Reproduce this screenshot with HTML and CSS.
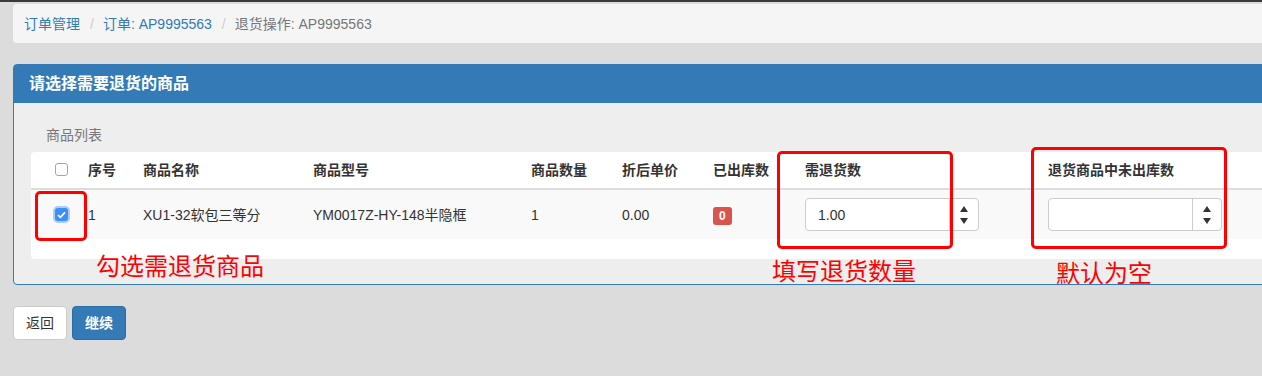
FILE: index.html
```html
<!DOCTYPE html>
<html lang="zh-CN">
<head>
<meta charset="UTF-8">
<title>退货操作: AP9995563</title>
<link rel="stylesheet" href="styles.css">
</head>
<body>
<div class="page">
 <div class="breadcrumb">
  <a href="#">订单管理</a><span class="sep">/</span>
  <a href="#">订单: AP9995563</a><span class="sep">/</span>
  <span class="active">退货操作: AP9995563</span>
 </div>

 <div class="panel">
  <div class="panel-heading">请选择需要退货的商品</div>
  <div class="panel-body">
   <div class="list-label">商品列表</div>
   <div class="table-box">
    <table class="goods">
     <colgroup>
      <col style="width:49px"><col style="width:55px"><col style="width:170px">
      <col style="width:218px"><col style="width:91px"><col style="width:91px">
      <col style="width:92px"><col style="width:243px"><col>
     </colgroup>
     <thead>
      <tr>
       <th class="chk"><span class="cb"></span></th>
       <th>序号</th>
       <th>商品名称</th>
       <th>商品型号</th>
       <th>商品数量</th>
       <th>折后单价</th>
       <th>已出库数</th>
       <th>需退货数</th>
       <th>退货商品中未出库数</th>
      </tr>
     </thead>
     <tbody>
      <tr>
       <td class="chk"><span class="cb checked"><svg width="9" height="8" viewBox="0 0 9 8"><path d="M1 4.2 L3.4 6.4 L8 1.4" fill="none" stroke="#fff" stroke-width="1.7"/></svg></span></td>
       <td>1</td>
       <td>XU1-32软包三等分</td>
       <td>YM0017Z-HY-148半隐框</td>
       <td>1</td>
       <td>0.00</td>
       <td><span class="badge">0</span></td>
       <td>
        <div class="spin">
         <input type="text" value="1.00">
         <span class="arrows"><i class="up"></i><i class="down"></i></span>
        </div>
       </td>
       <td>
        <div class="spin">
         <input type="text" value="">
         <span class="arrows"><i class="up"></i><i class="down"></i></span>
        </div>
       </td>
      </tr>
     </tbody>
    </table>
   </div>
  </div>
 </div>

 <div class="actions">
  <button class="btn">返回</button>
  <button class="btn btn-primary">继续</button>
 </div>
</div>

<!-- annotations drawn over the screenshot -->
<div class="mark mark-1"></div>
<div class="mark mark-2"></div>
<div class="mark mark-3"></div>
<div class="note note-1">勾选需退货商品</div>
<div class="note note-2">填写退货数量</div>
<div class="note note-3">默认为空</div>
</body>
</html>
```

FILE: styles.css
```css
html { overflow: hidden; background: #dcdcdc; }
body { margin: 0; position: relative; border-top: 2px solid #3a3a3a;
       font: 14px "Liberation Sans", "Noto Sans CJK SC", sans-serif;
       line-height: 20px; color: #333; }
a { color: #337ab7; text-decoration: none; }

.page { width: 1300px; padding: 2px 0 0 13px; }

.breadcrumb { display: flex; align-items: center; height: 39px;
              padding: 0 11px; background: #f5f5f5; border-radius: 4px; }
.breadcrumb .sep { color: #ccc; margin: 0 9px 0 10px; }
.breadcrumb .active { color: #777; }

.panel { margin-top: 21px; border: 1px solid #337ab7; border-radius: 4px;
         background: #eee; }
.panel-heading { background: #337ab7; color: #fff; font-size: 16px;
                 font-weight: bold; line-height: 18px; padding: 10px 15px; }
.panel-body { padding: 22px 0 25px 17px; }
.list-label { color: #777; padding-left: 15px; margin-bottom: 7px; }

.table-box { background: #fff; border-radius: 4px; padding-bottom: 20px; }
table.goods { width: 100%; table-layout: fixed; border-collapse: collapse; }
.goods th { text-align: left; padding: 8px; border-bottom: 2px solid #ddd; }
.goods td { padding: 8px; background: #f9f9f9; vertical-align: middle;
            white-space: nowrap; }
.goods .chk { padding-left: 24px; }

.cb { display: inline-block; width: 11px; height: 11px; vertical-align: -1px;
      border: 1px solid #a6a6a6; border-radius: 3px; background: #fff; }
.cb.checked { position: relative; width: 13px; height: 13px; border: 0;
              background: #3d8ef6; box-shadow: 0 0 0 2px #a9cdfb; }
.cb.checked svg { position: absolute; left: 2px; top: 3px; }

.badge { display: inline-block; background: #d9534f; color: #fff;
         font-size: 12px; font-weight: bold; line-height: 18px;
         padding: 0 6px; border-radius: 3px; }

.spin { display: flex; width: 174px; height: 33px; box-sizing: border-box;
        border: 1px solid #ccc; border-radius: 4px; background: #fff; }
.spin input { width: 0; flex: 1; border: 0; outline: 0; padding: 0 12px;
              font: inherit; color: #333; background: transparent; }
.arrows { width: 28px; border-left: 1px solid #ccc; display: flex;
          flex-direction: column; align-items: center; justify-content: center;
          gap: 6px; }
.arrows i { display: block; width: 0; height: 0;
            border-left: 4px solid transparent; border-right: 4px solid transparent; }
.arrows .up { border-bottom: 6px solid #333; }
.arrows .down { border-top: 6px solid #333; }

.actions { display: flex; gap: 5px; margin-top: 21px; }
.btn { font: inherit; line-height: 20px; padding: 6px 12px; border-radius: 4px;
       border: 1px solid #ccc; background: #fff; color: #333; }
.btn-primary { background: #337ab7; border-color: #2e6da4; color: #fff;
               font-weight: bold; }

.mark { position: absolute; box-sizing: border-box; border: 3px solid #f00;
        border-radius: 5px; }
.mark-1 { left: 35px; top: 189px; width: 52px; height: 50px; }
.mark-2 { left: 777px; top: 149px; width: 176px; height: 98px; }
.mark-3 { left: 1031px; top: 145px; width: 196px; height: 102px; }

.note { position: absolute; color: #f00; font-size: 24px; line-height: 24px;
        font-family: "Noto Sans CJK SC", sans-serif; }
.note-1 { left: 96px; top: 251px; }
.note-2 { left: 772px; top: 256px; }
.note-3 { left: 1056px; top: 258px; }
```
